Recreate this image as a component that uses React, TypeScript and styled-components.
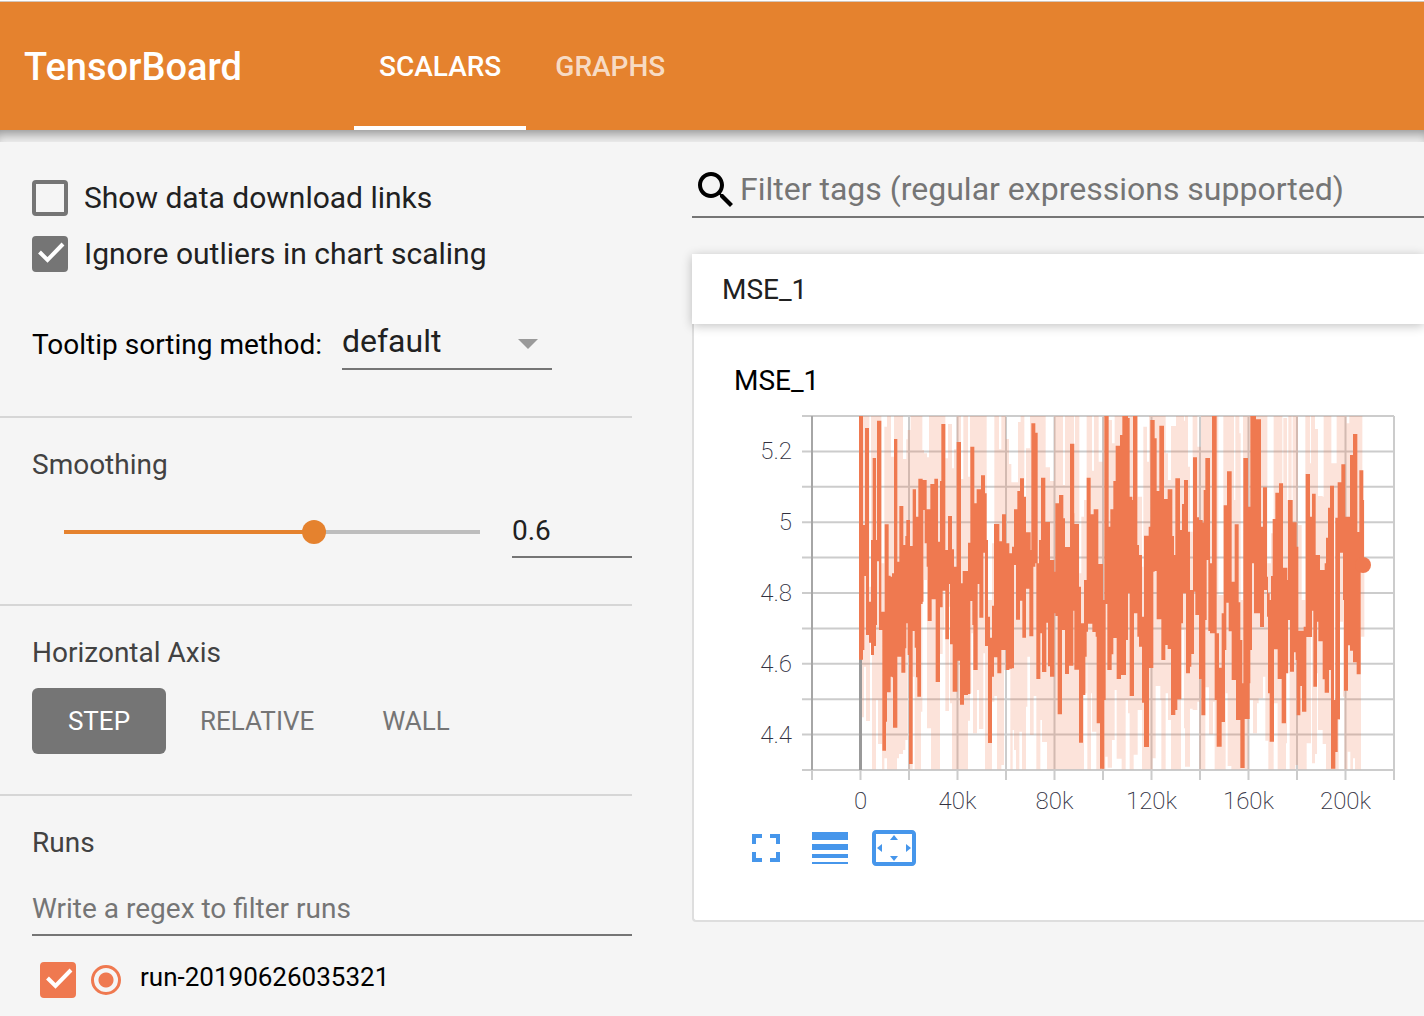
import React, { useState } from 'react';
import styled, { createGlobalStyle } from 'styled-components';

const ORANGE = '#e5822e';
const RUN = '#ef7950';
const GREY = '#757575';
const FONT = 'Roboto, "Noto Sans", sans-serif';

const GlobalStyle = createGlobalStyle`
  *, *::before, *::after { box-sizing: border-box; }
  body {
    margin: 0;
    background: #f5f5f5;
    font-family: ${FONT};
    color: #212121;
    overflow: hidden;
  }
  button, input, select { font-family: inherit; }
`;

const Page = styled.div`
  display: flex;
  flex-direction: column;
  min-height: 100vh;
  border-top: 1px solid #fff;
`;

const Toolbar = styled.header`
  display: flex;
  align-items: stretch;
  height: 129px;
  padding-left: 24px;
  border-top: 1px solid #d2c6bc;
  background: ${ORANGE};
`;

const Brand = styled.h1`
  flex: 0 0 330px;
  align-self: center;
  margin: 0;
  padding-top: 2px;
  font-size: 38px;
  line-height: 48px;
  font-weight: 500;
  color: #fff;
`;

const TabBar = styled.nav`
  display: flex;
  gap: 4px;
`;

const Tab = styled.button<{ $active?: boolean }>`
  padding: 6px 25px 0;
  border: 0;
  border-bottom: 4px solid ${(p) => (p.$active ? '#fff' : 'transparent')};
  background: none;
  font-size: 28px;
  line-height: 32px;
  font-weight: 500;
  color: ${(p) => (p.$active ? '#fff' : 'rgba(255, 255, 255, 0.74)')};
`;

const ToolbarShade = styled.div`
  height: 12px;
  box-shadow: inset 0 10px 12px -6px rgba(0, 0, 0, 0.4);
  background: #f0f0f0;
`;

const Content = styled.div`
  display: flex;
  flex: 1;
`;

const Sidebar = styled.aside`
  flex: 0 0 632px;
`;

const Section = styled.section<{ $top?: number; $bottom?: number; $last?: boolean }>`
  display: flex;
  flex-direction: column;
  padding: ${(p) => p.$top ?? 32}px 0 ${(p) => p.$bottom ?? 46}px 32px;
  border-bottom: ${(p) => (p.$last ? '0' : '2px solid #d6d6d6')};
`;

const Heading = styled.h2`
  margin: 0;
  font-size: 28px;
  line-height: 30px;
  font-weight: 400;
  color: #424242;
`;

const Options = styled.div`
  display: flex;
  flex-direction: column;
  gap: 20px;
`;

const OptionLabel = styled.label`
  display: flex;
  align-items: center;
  gap: 16px;
  font-size: 30px;
  line-height: 36px;
`;

const Tick = styled.span`
  display: grid;
  flex: none;
  width: 36px;
  height: 36px;
  > * { grid-area: 1 / 1; }
  svg { pointer-events: none; }
`;

const TickInput = styled.input<{ $color: string }>`
  appearance: none;
  width: 36px;
  height: 36px;
  margin: 0;
  border: 4px solid ${(p) => p.$color};
  border-radius: 4px;
  &:checked { background: ${(p) => p.$color}; }
`;

const SortRow = styled.div`
  display: flex;
  align-items: center;
  gap: 20px;
  margin-top: 46px;
`;

const SortLabel = styled.label`
  padding-top: 2px;
  font-size: 28px;
  line-height: 32px;
  color: #000;
`;

const SelectBox = styled.div`
  display: grid;
  align-items: center;
  width: 210px;
  height: 52px;
  border-bottom: 2px solid ${GREY};
  > * { grid-area: 1 / 1; }
  svg { justify-self: end; pointer-events: none; color: #9a9a9a; }
`;

const Select = styled.select`
  appearance: none;
  width: 100%;
  height: 48px;
  padding: 0 0 4px;
  border: 0;
  background: none;
  font-size: 32px;
  line-height: 40px;
  color: #212121;
`;

const SmoothRow = styled.div`
  display: flex;
  align-items: center;
  justify-content: space-between;
  margin-top: 26px;
  padding-left: 20px;
`;

const Slider = styled.input<{ $ratio: number }>`
  appearance: none;
  width: 440px;
  height: 24px;
  margin: 0;
  background: none;
  &::-webkit-slider-runnable-track {
    height: 24px;
    background: linear-gradient(
      to right,
      transparent 12px,
      ${ORANGE} 12px,
      ${ORANGE} calc(12px + (100% - 24px) * ${(p) => p.$ratio}),
      #bdbdbd calc(12px + (100% - 24px) * ${(p) => p.$ratio}),
      #bdbdbd calc(100% - 12px),
      transparent calc(100% - 12px)
    ) center / 100% 4px no-repeat;
  }
  &::-webkit-slider-thumb {
    appearance: none;
    width: 24px;
    height: 24px;
    border-radius: 50%;
    background: ${ORANGE};
  }
`;

const TextField = styled.input<{ $width?: number; $gap?: number }>`
  width: ${(p) => (p.$width ? `${p.$width}px` : '100%')};
  height: 52px;
  margin: ${(p) => p.$gap ?? 0}px 0 0;
  padding: 0 0 2px;
  border: 0;
  border-bottom: 2px solid ${GREY};
  border-radius: 0;
  background: none;
  outline: none;
  font-size: 28px;
  line-height: 32px;
  color: #212121;
  &::placeholder { color: ${GREY}; opacity: 1; }
`;

const AxisButtons = styled.div`
  display: flex;
  margin-top: 20px;
`;

const AxisButton = styled.button<{ $active: boolean }>`
  min-width: 134px;
  height: 66px;
  padding: 0 34px;
  border: 0;
  border-radius: 6px;
  background: ${(p) => (p.$active ? GREY : 'transparent')};
  font-size: 26px;
  line-height: 32px;
  color: ${(p) => (p.$active ? '#fff' : GREY)};
`;

const RunRow = styled.div`
  display: flex;
  align-items: center;
  gap: 15px;
  margin-top: 26px;
  padding-left: 8px;
`;

const RunRadio = styled.input`
  appearance: none;
  width: 30px;
  height: 30px;
  margin: 0;
  border: 3px solid ${RUN};
  border-radius: 50%;
  &:checked { background: radial-gradient(circle, ${RUN} 7px, transparent 8px); }
`;

const RunName = styled.label`
  padding: 0 0 6px 4px;
  font-size: 26px;
  line-height: 30px;
  color: #000;
`;

const Main = styled.main`
  flex: 1;
  min-width: 0;
  padding: 24px 0 0 60px;
`;

const SearchRow = styled.div`
  display: flex;
  align-items: center;
  height: 52px;
  padding-bottom: 2px;
  border-bottom: 2px solid ${GREY};
  color: #000;
`;

const SearchInput = styled.input`
  flex: 1;
  min-width: 0;
  height: 48px;
  padding: 0 0 2px;
  border: 0;
  background: none;
  outline: none;
  font-size: 32px;
  line-height: 40px;
  &::placeholder { color: ${GREY}; opacity: 1; }
`;

const Pane = styled.section`
  margin-top: 36px;
`;

const PaneHeader = styled.button`
  position: relative;
  display: block;
  width: 100%;
  height: 70px;
  padding: 2px 30px 0;
  border: 0;
  background: #fff;
  box-shadow: 0 2px 10px rgba(0, 0, 0, 0.24);
  font-size: 28px;
  line-height: 36px;
  text-align: left;
  color: #212121;
`;

const PaneBody = styled.div`
  padding: 40px 0 48px 40px;
  border: solid #dedede;
  border-width: 0 0 2px 2px;
  border-bottom-left-radius: 4px;
  background: #fff;
`;

const ChartTitle = styled.h3`
  margin: 0;
  font-size: 28px;
  line-height: 34px;
  font-weight: 400;
  color: #000;
`;

const ChartSvg = styled.svg`
  display: block;
  width: 672px;
  height: 420px;
  text {
    font-family: ${FONT};
    font-size: 24px;
    font-weight: 200;
    fill: #32313f;
  }
`;

const ChartTools = styled.div`
  display: flex;
  gap: 16px;
  margin-top: 6px;
  padding-left: 8px;
`;

const ToolButton = styled.button`
  width: 48px;
  height: 48px;
  padding: 0;
  border: 0;
  background: none;
  color: #4696eb;
`;

const Icon = ({ d }: { d: string }) => (
  <svg width="48" height="48" viewBox="0 0 24 24" fill="currentColor" display="block" aria-hidden="true">
    <path d={d} />
  </svg>
);

const ICONS = {
  search:
    'M15.5 14h-.79l-.28-.27C15.41 12.59 16 11.11 16 9.5 16 5.91 13.09 3 9.5 3S3 5.91 3 9.5 5.91 16 9.5 16c1.61 0 3.09-.59 4.23-1.57l.27.28v.79l5 4.99L20.49 19l-4.99-5zm-6 0C7.01 14 5 11.99 5 9.5S7.01 5 9.5 5 14 7.01 14 9.5 11.99 14 9.5 14z',
  drop: 'M7 10l5 5 5-5z',
  fullscreen: 'M7 14H5v5h5v-2H7v-3zm-2-4h2V7h3V5H5v5zm12 7h-3v2h5v-5h-2v3zM14 5v2h3v3h2V5h-5z',
  lines: 'M3 17h18v-2H3v2zm0 3h18v-1H3v1zm0-7h18v-3H3v3zm0-9v4h18V4H3z',
  fit: 'M12.01 5.5L10 8h4l-1.99-2.5zM18 10v4l2.5-1.99L18 10zM6 10l-2.5 2.01L6 14v-4zm8 6h-4l2.01 2.5L14 16zm7-13H3c-1.1 0-2 .9-2 2v14c0 1.1.9 2 2 2h18c1.1 0 2-.9 2-2V5c0-1.1-.9-2-2-2zm0 16.01H3V4.99h18v14.02z',
};

type CheckProps = { id: string; color?: string; checked: boolean; onChange: (v: boolean) => void; label?: string };

const Check = ({ id, color = GREY, checked, onChange, label }: CheckProps) => (
  <Tick>
    <TickInput
      id={id}
      type="checkbox"
      $color={color}
      checked={checked}
      aria-label={label}
      onChange={(e) => onChange(e.target.checked)}
    />
    {checked && (
      <svg width="36" height="36" viewBox="0 0 36 36" fill="none" stroke="#fff" strokeWidth="4" aria-hidden="true">
        <path d="M7.5 16L15.5 24L31 8" />
      </svg>
    )}
  </Tick>
);

/* Each sample is "x high low" and holds until the x of the next one. Three sample units make one pixel. */
type Block = [number, string];

const SMOOTHED: Block[] = [
  [0, '357 48 779,369 375 750,373 375 528,375 84 528,378 84 705,387 605 728,393 420 765,398 174 765,402 174 738,408 420 675,411 62 484,417 62 690,424 635 690,427 635 1052,434 373 1052,438 373 965,441 373 877,446 527 877,452 530 830,456 520 832,459 520 983,462 117 983,472 485 770,478 318 770,484 318 818,490 435 818,496 408 745,499 360 670,503 360 765,507 360 1092,510 438 1092,518 268 693,524 268 743,528 350 832,532 350 890,535 236 890,543 236 612,548 240 605,550 240 330,554 240 430,560 328 500,563 328 663,571 252 663,575 252 598,583 236 598,587 236 846,594 425 846,600 243 622,604 72 622,608 72 572,616 450 718,624 348 718,627 348 552,630 348 733,636 448 733,638 448 875,642 500 875,650 126 875,652 126 782,660 126 914,663 550 914,668 513 914,672 513 885,684 428 882'],
  [600, '91 140 603,97 140 675,100 140 810,103 310 810,110 268 810,113 268 552,118 268 653,123 226 653,130 226 458,135 280 738,140 420 738,144 650 1029,150 713 1029,156 617 830,162 372 772,172 372 820,178 424 820,184 424 750,186 343 750,198 430 810,208 460 806,216 440 805,222 328 495,228 328 659,232 273 659,240 235 602,247 235 713,252 290 713,258 397 566,268 397 709,272 450 709,274 70 709,280 70 500,286 98 490,289 98 837,293 490 837,297 420 837,301 420 700,303 233 700,306 233 816,316 366 816,319 366 668,324 366 799,330 480 830,343 515 640,346 310 648,353 310 943,357 285 943,366 285 690,370 355 690,375 441 822,387 441 797,390 131 797,400 131 632,403 372 809,417 560 1028,423 670 1028,429 670 885,432 540 885,436 540 770,440 233 695,444 233 671,452 343 671,457 343 696,461 328 696,467 328 710,470 328 970,475 492 970,480 492 1106,489 600 1106,493 48 900,497 48 612,502 48 810,506 380 810,511 328 810,515 328 763,520 243 714,527 137 714,530 137 837,540 105 837,543 105 825,547 48 825,558 48 720,564 54 580,569 290 888,577 300 888,579 48 888,582 48 640,592 435 710,597 465 740,606 650 908,612 407 1041,626 380 1041,627 380 804,631 60 804,640 60 515,644 115 513,650 273 658,658 77 658,664 77 780,672 297 780,676 297 735,683 268 747,693 268 945,697 408 945,702 465 945,706 235 930,712 235 898'],
  [1320, '0 390 898,4 390 670,6 312 670,9 312 580,12 240 580,18 240 820,24 395 820,30 570 800,34 570 762,39 172 762,42 172 575,46 172 645,51 352 645,57 360 837,64 360 946,68 368 946,71 270 946,76 174 660,80 174 480,85 174 693,90 490 700,96 48 700,104 48 900,110 700 1040,117 803 1040,125 640 966,131 316 966,135 316 750,139 316 608,141 214 608,146 214 694,155 545 840,164 373 840,168 373 960,176 607 960,181 720 1104,187 850 1104,190 174 1104,194 174 957,204 320 957,209 320 850,211 48 750,216 48 490,222 48 640,228 58 640,240 58 681,243 380 681,249 262 681,252 262 570,261 530 650,264 580 880,269 600 1025,273 528 1025,278 357 1025,282 357 748,286 278 748,293 278 837,297 250 837,305 250 970,309 503 970,318 503 820,322 540 820,324 300 660,330 300 815,338 367 815,342 367 757,347 367 780,350 440 946,355 692 946,361 692 858,366 692 935,371 680 935,377 222 935,379 222 711,390 350 711,396 281 632,400 281 860,407 465 860,411 465 665,415 465 724,420 510 724,428 510 838,434 490 878,438 413 878,444 323 878,447 323 810,450 257 810,453 257 1106,462 900 1106,466 353 1056,471 353 1056,473 247 958,480 247 458,484 193 458,489 193 600,492 193 872,496 350 872,504 350 736,510 165 752,519 102 787,530 102 823,532 396 823,538 211 823,542 211 490,550 300 490,552 300 490'],
];

const RAW: Block[] = [
  [0, '357 48 700,366 48 952,372 48 800,378 48 963,388 560 963,390 560 728,393 48 765,396 48 1108,408 48 900,414 48 1032,424 490 1032,426 490 1108,433 80 1075,441 48 1108,453 170 1108,462 48 1108,471 48 1075,477 48 1062,489 177 1050,496 177 1020,499 118 1020,503 90 760,506 90 1108,512 48 1108,518 48 830,524 48 1108,543 48 935,547 150 605,552 160 540,561 172 985,567 48 985,573 48 1108,600 48 762,608 48 690,613 48 520,616 175 933,624 72 933,627 72 620,630 72 910,636 205 1108,642 148 1108,650 48 1108,663 237 1108,670 48 1108,684 230 962,690 48 880,694 48 700,699 48 1000,711 48 870,717 48 987,730 48 760,735 48 1108'],
  [600, '140 600 1108,156 430 905,163 48 888,171 48 1108,177 148 1108,184 48 1095,192 48 810,198 117 810,207 192 810,211 192 1108,214 247 1108,218 247 990,222 247 1050,228 247 1108,234 66 1108,238 66 995,242 48 995,246 48 1108,253 600 1108,258 145 920,262 145 770,270 48 1005,281 48 888,289 48 1108,301 48 960,306 48 1026,317 202 1026,321 202 1108,330 243 1108,342 48 1108,369 255 1108,375 48 1108,389 48 1108,402 340 1108,405 48 1108,418 520 1108,424 350 1108,432 300 880,440 48 790,442 48 1108,453 48 880,456 212 995,462 48 995,469 48 1108,476 185 1108,488 48 1108,496 48 1070,503 60 1103,516 130 1020,524 48 870,530 48 1076,545 48 1108,557 48 900,564 48 940,569 48 1108,581 48 1064,593 290 930,606 500 1108,610 80 1108,621 185 1108,627 48 1108,638 48 1075,647 48 858,661 48 900,664 48 1108,677 160 880,684 240 960,693 78 1108,704 78 1108,708 48 1108'],
  [1320, '3 48 690,12 62 985,15 48 1100,24 200 1100,30 395 926,38 48 930,52 140 905,58 140 1108,63 48 1108,76 48 862,87 48 1003,99 48 905,104 48 1108,115 585 1108,130 48 1108,137 48 880,143 48 1098,154 48 1108,162 300 1108,166 48 1108,173 48 1108,178 100 1108,182 600 1108,189 48 1108,206 48 900,219 48 1000,231 48 910,236 48 895,249 48 830,256 48 1022,262 490 1022,265 490 1108,273 400 1108,281 48 910,293 48 1108,307 250 1108,310 54 1108,318 54 1030,321 300 820,325 48 820,329 48 1108,335 300 1108,338 48 1108,346 48 1095,354 375 1108,365 600 1108,376 48 1108,380 48 1030,390 190 1030,393 48 710,396 48 1090,405 87 1062,411 87 820,414 288 990,428 290 1032,431 48 1032,438 48 1108,454 190 1108,470 48 1108,476 48 960,480 48 665,489 48 890,493 48 1108,500 70 1108,503 70 1055,508 48 1055,511 48 1108,519 48 1075,525 48 1108,543 48 710,547 300 710,553 300 710'],
];

const toX = (v: number) => v / 3 - 72;
const toY = (v: number) => v / 3 - 16;

const envelope = (blocks: Block[]) => {
  const rows = blocks.flatMap(([shift, text]) =>
    text.split(',').map((row) => {
      const [x, high, low] = row.split(' ').map(Number);
      return [toX(x + shift), toY(high), toY(low)];
    }),
  );
  const top: string[] = [];
  const bottom: string[] = [];
  rows.slice(0, -1).forEach(([x, high, low], i) => {
    const next = rows[i + 1][0];
    top.push(`${x} ${high}`, `${next} ${high}`);
    bottom.unshift(`${next} ${low}`, `${x} ${low}`);
  });
  return `M${[...top, ...bottom].join('L')}Z`;
};

const PLOT_W = 582;
const PLOT_H = 354;
const COLS = Array.from({ length: 13 }, (_, i) => (PLOT_W / 12) * i);
const ROWS = Array.from({ length: 11 }, (_, i) => (PLOT_H / 10) * i);
const X_LABELS = ['0', '40k', '80k', '120k', '160k', '200k'];
const Y_LABELS = ['5.2', '5', '4.8', '4.6', '4.4'];

const Chart = () => (
  <ChartSvg viewBox="0 0 672 420" role="img" aria-label="MSE_1 by step">
    <g transform="translate(78 18)">
      <g stroke="#ccc" strokeWidth="2">
        {ROWS.map((y) => (
          <path key={y} d={`M-10 ${y}H${PLOT_W}`} />
        ))}
        {COLS.map((x) => (
          <path key={x} d={`M${x} 0V${PLOT_H + 10}`} />
        ))}
      </g>
      <path d={`M0 0V${PLOT_H}`} stroke="#a6a6a6" strokeWidth="2" />
      <path d={`M48.5 0V${PLOT_H}`} stroke="#999" strokeWidth="3" />
      <path d={envelope(RAW)} fill={RUN} fillOpacity="0.21" />
      <path d={envelope(SMOOTHED)} fill={RUN} />
      <path d="M522.5 102V284" stroke="#fff" strokeOpacity="0.7" />
      <circle cx="551" cy="149" r="8" fill={RUN} />
      {X_LABELS.map((label, i) => (
        <text key={label} x={48.5 + 97 * i} y={PLOT_H + 39} textAnchor="middle">
          {label}
        </text>
      ))}
      {Y_LABELS.map((label, i) => (
        <text key={label} x="-20" y={43 + 71 * i} textAnchor="end">
          {label}
        </text>
      ))}
    </g>
  </ChartSvg>
);

const AXES = ['STEP', 'RELATIVE', 'WALL'];

export default function App() {
  const [links, setLinks] = useState(false);
  const [outliers, setOutliers] = useState(true);
  const [smoothing, setSmoothing] = useState('0.6');
  const [axis, setAxis] = useState('STEP');
  const [run, setRun] = useState(true);

  return (
    <Page>
      <GlobalStyle />
      <Toolbar>
        <Brand>TensorBoard</Brand>
        <TabBar>
          <Tab $active>SCALARS</Tab>
          <Tab>GRAPHS</Tab>
        </TabBar>
      </Toolbar>
      <ToolbarShade />
      <Content>
        <Sidebar>
          <Section $top={38}>
            <Options>
              <OptionLabel htmlFor="links">
                <Check id="links" checked={links} onChange={setLinks} />
                Show data download links
              </OptionLabel>
              <OptionLabel htmlFor="outliers">
                <Check id="outliers" checked={outliers} onChange={setOutliers} />
                Ignore outliers in chart scaling
              </OptionLabel>
            </Options>
            <SortRow>
              <SortLabel htmlFor="sorting">Tooltip sorting method:</SortLabel>
              <SelectBox>
                <Select id="sorting" defaultValue="default">
                  <option>default</option>
                  <option>descending</option>
                  <option>ascending</option>
                  <option>nearest</option>
                </Select>
                <Icon d={ICONS.drop} />
              </SelectBox>
            </SortRow>
          </Section>
          <Section>
            <Heading>Smoothing</Heading>
            <SmoothRow>
              <Slider
                type="range"
                min="0"
                max="1"
                step="0.001"
                aria-label="Smoothing"
                value={smoothing}
                $ratio={Number(smoothing) || 0}
                onChange={(e) => setSmoothing(e.target.value)}
              />
              <TextField
                $width={120}
                aria-label="Smoothing value"
                value={smoothing}
                onChange={(e) => setSmoothing(e.target.value)}
              />
            </SmoothRow>
          </Section>
          <Section $bottom={40}>
            <Heading>Horizontal Axis</Heading>
            <AxisButtons>
              {AXES.map((name) => (
                <AxisButton key={name} $active={axis === name} onClick={() => setAxis(name)}>
                  {name}
                </AxisButton>
              ))}
            </AxisButtons>
          </Section>
          <Section $last $bottom={16}>
            <Heading>Runs</Heading>
            <TextField $gap={26} placeholder="Write a regex to filter runs" aria-label="Filter runs" />
            <RunRow>
              <Check id="run" color={RUN} checked={run} onChange={setRun} label="Show run" />
              <RunRadio id="run-only" type="radio" name="run" defaultChecked />
              <RunName htmlFor="run-only">run-20190626035321</RunName>
            </RunRow>
          </Section>
        </Sidebar>
        <Main>
          <SearchRow>
            <Icon d={ICONS.search} />
            <SearchInput placeholder="Filter tags (regular expressions supported)" aria-label="Filter tags" />
          </SearchRow>
          <Pane>
            <PaneHeader>MSE_1</PaneHeader>
            <PaneBody>
              <ChartTitle>MSE_1</ChartTitle>
              <Chart />
              <ChartTools>
                <ToolButton aria-label="Full size">
                  <Icon d={ICONS.fullscreen} />
                </ToolButton>
                <ToolButton aria-label="Toggle log scale">
                  <Icon d={ICONS.lines} />
                </ToolButton>
                <ToolButton aria-label="Fit to data">
                  <Icon d={ICONS.fit} />
                </ToolButton>
              </ChartTools>
            </PaneBody>
          </Pane>
        </Main>
      </Content>
    </Page>
  );
}
